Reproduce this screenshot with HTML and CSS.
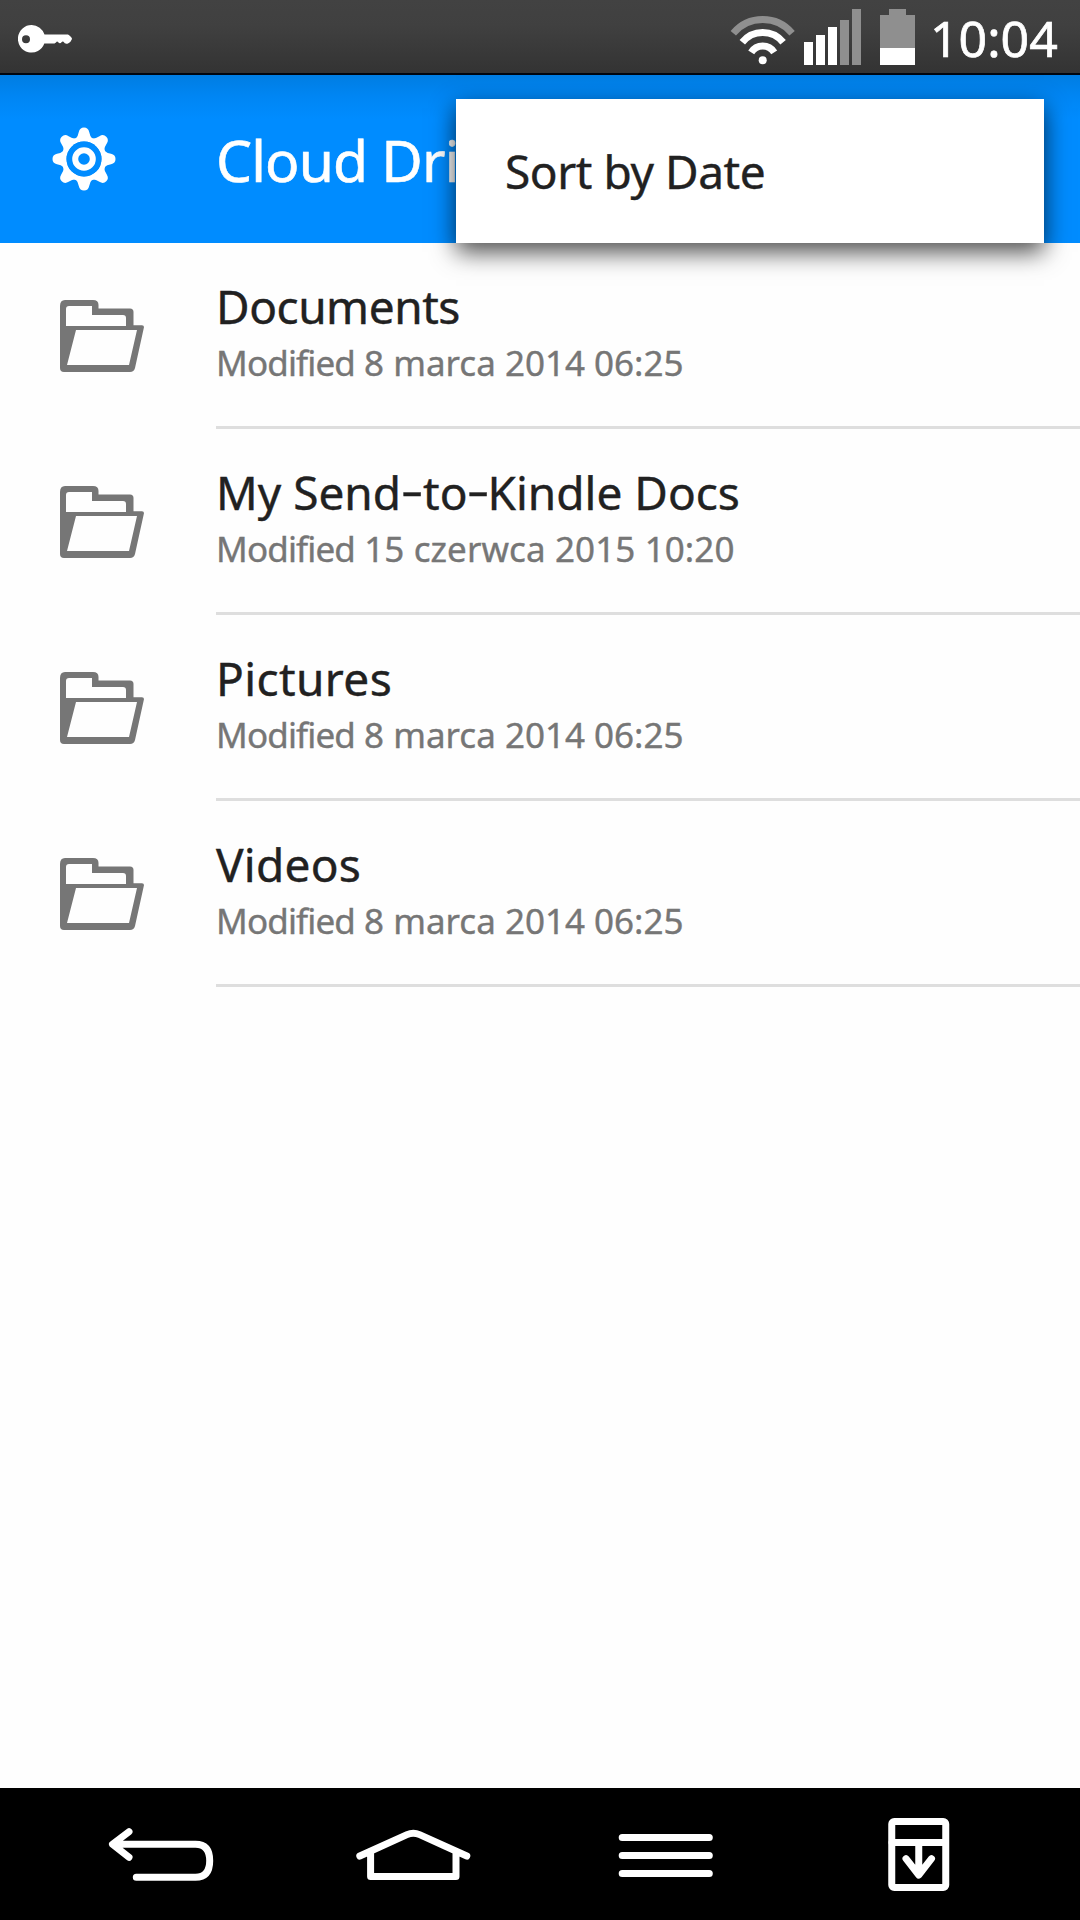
FILE: index.html
```html
<!DOCTYPE html>
<html lang="en">
<head>
<meta charset="utf-8">
<title>Cloud Drive</title>
<link rel="stylesheet" href="styles.css">
</head>
<body>
<svg width="0" height="0" class="defs">
  <symbol id="folder" viewBox="0 0 84 72">
    <path fill="#767676" fill-rule="evenodd" d="M5 0H33Q38.500 0 38.500 5V8.500H70Q73.500 8.500 73.500 12V25.300H82Q84.500 25.300 83.800 28L75 68Q74 72 70 72H4Q0 72 0 68V6Q0 0 5 0ZM9 6Q6 6 6 9V26H66V18Q66 15 63 15H32V6ZM16 30L7 65H69L77 30Z"/>
  </symbol>
</svg>
<div class="screen">
  <div class="status">
    <svg class="key" width="55" height="30" viewBox="0 0 55 30">
      <path fill="#fff" fill-rule="evenodd" d="M13.700 1A13.600 13.700 0 0 1 26.500 10.500H50Q54 13 54 15Q53 18 50 19.500Q47 20.500 45.500 17.800Q44.500 17 43.500 18.200Q42 20.500 40 18Q39 17 38 18.500L36.500 19.500H26.300A13.600 13.800 0 1 1 13.700 1ZM8 11.200A4 4 0 1 0 8 19.200A4 4 0 1 0 8 11.200Z"/>
    </svg>
    <div class="indicators">
      <svg width="190" height="73" viewBox="728 0 190 73">
        <g fill="none" stroke="#fff" stroke-width="7">
          <path stroke="#8f8f8f" d="M733.300 33.300A38.400 38.400 0 0 1 792.100 33.300"/>
          <path d="M742.300 42.200A26.200 26.200 0 0 1 783.100 42.200"/>
          <path d="M751.200 52.300A13.600 13.600 0 0 1 774.200 52.300"/>
        </g>
        <circle cx="762.700" cy="60.300" r="4" fill="#fff"/>
        <path fill="#fff" d="M804 42h9v23h-9zM816 35h9v30h-9zM828 27h9v38h-9zM880 48h35v17h-35z"/>
        <path fill="#8f8f8f" d="M840 20h9v45h-9zM852 9h9v56h-9zM880 15h9V9h17v6h9v33h-35z"/>
      </svg>
      <span class="clock">10:04</span>
    </div>
  </div>
  <header class="header">
    <svg class="gear" width="64" height="64" viewBox="-32 -32 64 64">
      <defs><path id="tooth" d="M-8.500 -20Q-5.800 -23 -5.200 -27Q-4.200 -31.500 0 -31.500Q4.200 -31.500 5.200 -27Q5.800 -23 8.500 -20Z"/></defs>
      <g fill="#fff">
        <use href="#tooth"/><use href="#tooth" transform="rotate(45)"/><use href="#tooth" transform="rotate(90)"/><use href="#tooth" transform="rotate(135)"/>
        <use href="#tooth" transform="rotate(180)"/><use href="#tooth" transform="rotate(225)"/><use href="#tooth" transform="rotate(270)"/><use href="#tooth" transform="rotate(315)"/>
      </g>
      <circle r="20" fill="none" stroke="#fff" stroke-width="5"/>
      <circle r="17.500" fill="#008cff"/>
      <circle r="8.800" fill="none" stroke="#fff" stroke-width="6"/>
    </svg>
    <h1 class="title">Cloud Drive</h1>
    <div class="menu">Sort by Date</div>
  </header>
  <main class="list">
    <div class="row">
      <svg class="folder"><use href="#folder"/></svg>
      <div class="info"><div class="name documents">Documents</div><div class="date"><span class="label">Modified</span> 8 marca 2014 06:25</div></div>
    </div>
    <div class="row">
      <svg class="folder"><use href="#folder"/></svg>
      <div class="info"><div class="name">My Send<span class="hyphen">-</span>to<span class="hyphen second">-</span>Kindle Docs</div><div class="date long"><span class="label">Modified</span> 15 czerwca 2015 10:20</div></div>
    </div>
    <div class="row">
      <svg class="folder"><use href="#folder"/></svg>
      <div class="info"><div class="name pictures">Pictures</div><div class="date"><span class="label">Modified</span> 8 marca 2014 06:25</div></div>
    </div>
    <div class="row">
      <svg class="folder"><use href="#folder"/></svg>
      <div class="info"><div class="name videos">Videos</div><div class="date"><span class="label">Modified</span> 8 marca 2014 06:25</div></div>
    </div>
  </main>
  <nav class="nav">
    <svg viewBox="0 0 120 132"><path d="M28 43.700L11.500 56.300L28 69.300M14 56.300H94.500Q108.700 56.300 108.700 72.800Q108.700 89.300 94.500 89.300H35.300"/></svg>
    <svg viewBox="0 0 120 132"><path d="M5.800 68L53 46.600Q59.300 43.900 65.600 46.600L112.800 68M16.600 64V88.500H102V64"/></svg>
    <svg viewBox="0 0 120 132"><path d="M16.200 49.500H103.300M16.200 67.500H103.300M16.200 85.500H103.300"/></svg>
    <svg viewBox="0 0 120 132"><rect x="32.750" y="33.500" width="54" height="66" rx="2.500"/><path d="M33 54.500H86.500M59.750 55V84M47 70.700L59.750 87L72.500 70.700"/></svg>
  </nav>
</div>
</body>
</html>
```
FILE: styles.css
```css
* { box-sizing: border-box; }
body {
  margin: 0;
  background: #fefefe;
  font-family: "Noto Sans", "Open Sans", sans-serif;
}
.defs { position: absolute; }
.screen {
  width: 1080px;
  height: 1920px;
  display: flex;
  flex-direction: column;
  overflow: hidden;
}
.status {
  height: 75px;
  flex: none;
  display: flex;
  justify-content: space-between;
  padding: 0 19px 0 18px;
  background: linear-gradient(#424242, #404040 35%, #333);
  border-bottom: 2px solid #00060f;
}
.key { margin-top: 24px; }
.indicators { display: flex; }
.clock {
  width: 131px;
  margin-left: 12px;
  color: #fff;
  font-size: 50px;
  line-height: 77px;
  white-space: nowrap;
  -webkit-text-stroke: .7px #fff;
}
.header {
  position: relative;
  height: 168px;
  flex: none;
  display: flex;
  align-items: center;
  padding-left: 52px;
  background: linear-gradient(#007de2, #0086f4 22px, #008cff 44px);
}
.title {
  margin: 0 0 0 100px;
  padding-top: 2px;
  color: #fff;
  font-size: 57px;
  font-weight: 400;
  letter-spacing: -.85px;
  white-space: nowrap;
  -webkit-text-stroke: .6px #fff;
}
.menu {
  position: absolute;
  left: 456px;
  top: 24px;
  width: 588px;
  height: 144px;
  padding-left: 49px;
  background: #fff;
  color: #212121;
  font-size: 46px;
  line-height: 144px;
  letter-spacing: -.43px;
  -webkit-text-stroke: .4px #212121;
  box-shadow: 0 9px 23px rgba(0, 0, 0, .7);
}
.list { flex: 1; }
.row {
  height: 186px;
  display: flex;
  padding-left: 60px;
}
.folder {
  width: 84px;
  height: 72px;
  margin: 57px 72px 0 0;
  flex: none;
}
.info {
  flex: 1;
  padding-top: 35px;
  border-bottom: 3px solid #dedede;
  white-space: nowrap;
}
.name {
  color: #212121;
  font-size: 46px;
  line-height: 56px;
  -webkit-text-stroke: .4px #212121;
}
.documents { letter-spacing: -.45px; }
.pictures { letter-spacing: .4px; }
.videos { letter-spacing: .25px; }
.hyphen {
  display: inline-block;
  width: 22px;
  text-align: center;
  transform: translateY(-4px) scaleX(1.5);
}
.second { width: 20px; }
.date {
  color: #767676;
  font-size: 35px;
  line-height: 58px;
  letter-spacing: 0;
  -webkit-text-stroke: .4px #767676;
}
.label { letter-spacing: -.85px; }
.long { letter-spacing: .1px; }
.nav {
  height: 132px;
  flex: none;
  display: grid;
  grid-template-columns: repeat(4, 1fr);
  justify-items: center;
  padding: 0 35px;
  background: #000;
}
.nav svg {
  width: 120px;
  height: 132px;
  fill: none;
  stroke: #fff;
  stroke-width: 7;
  stroke-linecap: round;
  stroke-linejoin: round;
}
```
